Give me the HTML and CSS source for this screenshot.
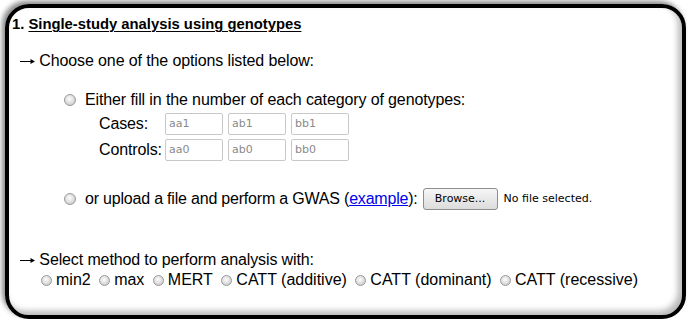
FILE: index.html
```html
<!DOCTYPE html>
<html>
<head>
<meta charset="utf-8">
<link rel="stylesheet" href="styles.css">
</head>
<body>
<div class="box">
  <div class="heading">1. <u>Single-study analysis using genotypes</u></div>
  <div class="line choose"><svg class="arr" width="15" height="8" viewBox="0 0 15 8"><path d="M0 4.5H13" stroke="#000" stroke-width="1"/><path d="M10.5 2L15 4.5L10.5 7Z" fill="#000"/></svg> Choose one of the options listed below:</div>
  <div class="option opt1">
    <span class="radio"></span><span>Either fill in the number of each category of genotypes:</span>
  </div>
  <div class="grid">
    <span class="lbl">Cases:</span>
    <span class="inp">aa1</span><span class="inp">ab1</span><span class="inp">bb1</span>
    <span class="lbl">Controls:</span>
    <span class="inp">aa0</span><span class="inp">ab0</span><span class="inp">bb0</span>
  </div>
  <div class="option opt2">
    <span class="radio"></span><span>or upload a file and perform a GWAS (<a href="#">example</a>):</span>
    <span class="btn">Browse...</span><span class="nofile">No file selected.</span>
  </div>
  <div class="line select"><svg class="arr" width="15" height="8" viewBox="0 0 15 8"><path d="M0 4.5H13" stroke="#000" stroke-width="1"/><path d="M10.5 2L15 4.5L10.5 7Z" fill="#000"/></svg> Select method to perform analysis with:</div>
  <div class="methods">
    <span class="radio sm"></span><span class="m">min2</span>
    <span class="radio sm"></span><span class="m">max</span>
    <span class="radio sm"></span><span class="m">MERT</span>
    <span class="radio sm"></span><span class="m">CATT (additive)</span>
    <span class="radio sm"></span><span class="m">CATT (dominant)</span>
    <span class="radio sm"></span><span class="m">CATT (recessive)</span>
  </div>
</div>
</body>
</html>
```
FILE: styles.css
```css
html, body { margin: 0; padding: 0; background: #fff; }
body { font-family: "Liberation Sans", Arial, sans-serif; color: #000; }
.box {
  box-sizing: border-box;
  width: 681px;
  height: 315px;
  margin: 4px 0 0 5px;
  border: 4px solid #000;
  border-radius: 24px;
  padding: 8px 0 0 3px;
  box-shadow: -3px -3px 5px #8a8a8a, inset -4px -4px 6px #b8b8b8;
}
.heading { font-size: 14.8px; font-weight: bold; line-height: 17px; }
.heading u { text-decoration-thickness: 1px; text-underline-offset: 2px; }
.line { font-size: 16px; line-height: 20px; padding-left: 8px; letter-spacing: -0.12px; }
.arr { vertical-align: 1px; }
.choose { margin-top: 18px; }
.option { display: flex; align-items: center; font-size: 16px; line-height: 20px; padding-left: 52px; letter-spacing: -0.12px; }
.opt1 { margin-top: 19px; }
.radio {
  display: inline-block;
  box-sizing: border-box;
  width: 12px; height: 12px;
  border-radius: 50%;
  border: 1px solid #9a9a9a;
  background: radial-gradient(circle at 45% 40%, #fdfdfd 0, #e2e2e2 45%, #bdbdbd 100%);
  margin-right: 9px;
  flex: none;
}
.radio.sm { width: 11px; height: 11px; margin-right: 4px; vertical-align: -1px; }
.grid {
  display: grid;
  grid-template-columns: 61px 58px 58px 58px;
  column-gap: 5px;
  row-gap: 4px;
  margin: 3px 0 0 87px;
  font-size: 16px;
  align-items: center;
  letter-spacing: -0.12px;
}
.lbl { line-height: 22px; white-space: nowrap; }
.inp {
  box-sizing: border-box;
  height: 22px;
  border: 1px solid #c8c8c8;
  border-radius: 2px;
  font-family: "DejaVu Sans", Tahoma, sans-serif;
  font-size: 11px;
  color: #8a8a8a;
  line-height: 20px;
  padding-left: 3px;
  letter-spacing: 0;
}
.opt2 { margin-top: 27px; letter-spacing: -0.2px; }
.opt2 a { color: #0000ee; }
.btn {
  box-sizing: border-box;
  height: 22px;
  width: 75px;
  margin-left: 5px;
  border: 1px solid #8e8e8e;
  border-radius: 3px;
  background: linear-gradient(#f6f6f6, #dcdcdc);
  font-family: "DejaVu Sans", Tahoma, sans-serif;
  font-size: 11px;
  line-height: 20px;
  text-align: center;
  letter-spacing: 0;
}
.nofile { font-family: "DejaVu Sans", Tahoma, sans-serif; font-size: 11px; margin-left: 6px; letter-spacing: 0; }
.select { margin-top: 40px; }
.methods { font-size: 16px; line-height: 20px; padding-left: 29px; }
.methods .m { margin-right: 4px; }
```
